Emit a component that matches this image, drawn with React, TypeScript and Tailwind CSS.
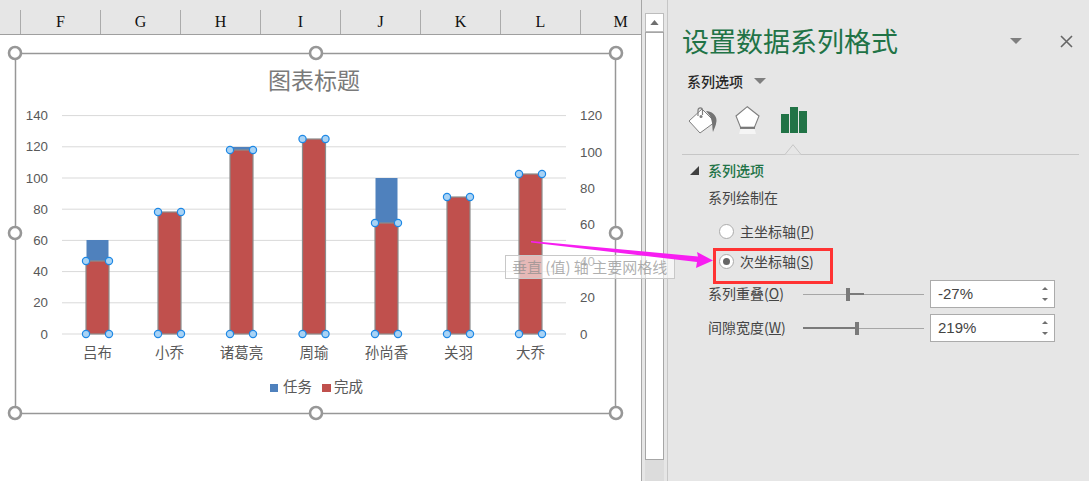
const cjk = "font-['Noto_Sans_CJK_SC','Liberation_Sans',sans-serif]";

const columns = ["F", "G", "H", "I", "J", "K", "L", "M"];

const gridLines = [334, 302.8, 271.6, 240.4, 209.2, 178, 146.8, 115.6];
const leftLabels = [0, 20, 40, 60, 80, 100, 120, 140];
const rightLabels = [0, 20, 40, 60, 80, 100, 120];

const people = [
  { name: "吕布", x: 97.5, blue: 240, red: 261 },
  { name: "小乔", x: 169.5, blue: 212, red: 212 },
  { name: "诸葛亮", x: 241.5, blue: 147, red: 150 },
  { name: "周瑜", x: 314, blue: 139, red: 139 },
  { name: "孙尚香", x: 386.5, blue: 178, red: 223 },
  { name: "关羽", x: 458.5, blue: 197, red: 197 },
  { name: "大乔", x: 530.5, blue: 174, red: 174 },
];

const frameHandles = [
  [15, 53],
  [316, 53],
  [616, 53],
  [15, 233],
  [616, 233],
  [15, 413],
  [316, 413],
  [616, 413],
];

function PointHandle({ x, y }: { x: number; y: number }) {
  return <circle cx={x} cy={y} r={3.6} fill="#a9d3f5" stroke="#1e88e5" strokeWidth={1.2} />;
}

function Chart() {
  return (
    <svg
      viewBox="15 53 601 360"
      className="ml-[15px] mt-[18px] h-[360px] w-[601px] overflow-visible"
    >
      <rect x={15.5} y={53.5} width={600} height={360} fill="#fff" stroke="#979797" strokeWidth={1.5} />
      <text x={314} y={89} textAnchor="middle" fontSize={23} fill="#7a7a7a" fontFamily="Noto Sans CJK SC">
        图表标题
      </text>
      {gridLines.map((y) => (
        <line key={y} x1={62} x2={566} y1={y} y2={y} stroke="#d9d9d9" strokeWidth={1} />
      ))}
      {leftLabels.map((v, i) => (
        <text key={v} x={48} y={338.5 - i * 31.2} textAnchor="end" fontSize={13.3} fill="#595959" fontFamily="Liberation Sans">
          {v}
        </text>
      ))}
      {rightLabels.map((v, i) => (
        <text key={v} x={580} y={338.5 - i * 36.4} fontSize={13.3} fill="#595959" fontFamily="Liberation Sans">
          {v}
        </text>
      ))}
      {people.map((p) => (
        <g key={p.name}>
          <rect x={p.x - 11} y={p.blue} width={22} height={334 - p.blue} fill="#4f81bd" />
          <rect x={p.x - 11.5} y={p.red} width={23} height={334 - p.red} fill="#c0504d" stroke="#8c8c8c" strokeWidth={1.2} />
          <PointHandle x={p.x - 11.5} y={p.red} />
          <PointHandle x={p.x + 11.5} y={p.red} />
          <PointHandle x={p.x - 11.5} y={334} />
          <PointHandle x={p.x + 11.5} y={334} />
          <text x={p.x} y={358} textAnchor="middle" fontSize={14.5} fill="#595959" fontFamily="Noto Sans CJK SC">
            {p.name}
          </text>
        </g>
      ))}
      <rect x={270} y={384} width={8} height={8} fill="#4f81bd" />
      <text x={283} y={392} fontSize={14.5} fill="#595959" fontFamily="Noto Sans CJK SC">
        任务
      </text>
      <rect x={322} y={384} width={9} height={8} fill="#c0504d" />
      <text x={334} y={392} fontSize={14.5} fill="#595959" fontFamily="Noto Sans CJK SC">
        完成
      </text>
      {frameHandles.map(([x, y]) => (
        <circle key={`${x}-${y}`} cx={x} cy={y} r={6} fill="#fff" stroke="#979797" strokeWidth={2.6} />
      ))}
    </svg>
  );
}

function Sheet() {
  return (
    <div className="h-full w-[642px] shrink-0 overflow-hidden border-r border-[#a6a6a6]">
      <div className="flex h-[35px] items-end border-b border-[#9f9f9f] bg-[#e6e6e6]">
        <div className="w-5 shrink-0" />
        {columns.map((c) => (
          <div
            key={c}
            className="flex h-6 w-20 shrink-0 items-center justify-center border-l border-[#ababab] font-['Liberation_Serif',serif] text-base font-medium text-[#111]"
          >
            {c}
          </div>
        ))}
      </div>
      <div className="h-[446px] bg-white">
        <Chart />
      </div>
    </div>
  );
}

function Scrollbar() {
  return (
    <div className="flex h-full w-[25px] shrink-0 bg-[#e6e6e6] pl-[3px]">
      <div className="mt-[13px] flex w-[19px] flex-col">
        <div className="flex h-[19px] items-center justify-center border border-[#bdbdbd] bg-white">
          <svg viewBox="0 0 10 6" className="h-[5px] w-[9px]">
            <path d="M5 0 10 6H0z" fill="#6f6f6f" />
          </svg>
        </div>
        <div className="h-[428px] border border-[#a6a6a6] bg-white" />
        <div className="flex-1 bg-[#dcdcdc]" />
      </div>
    </div>
  );
}

function PanelIcons() {
  return (
    <div className="ml-[19px] mt-[13px] flex h-[30px] items-start">
      <svg viewBox="0 0 30 30" className="h-[30px] w-[30px]">
        <path d="M15 5 28 18 13 29 2 17z" fill="#fff" stroke="#7f7f7f" strokeWidth={1} />
        <path d="M11 12V6.500C11 3 15.500 3 15.500 6.500V11" fill="none" stroke="#7f7f7f" strokeWidth={1.2} />
        <circle cx={14} cy={12.5} r={1.5} fill="#7f7f7f" />
        <path d="M19 7C24 7 30 11 29.500 17 29 22 27 25 26 28 25 23 26 19 23 12z" fill="#737373" />
      </svg>
      <svg viewBox="0 0 26 30" className="ml-[18px] h-[30px] w-[26px]">
        <path d="M12.300 2.700 24 12 19.300 23.700H5.700L1 12z" fill="#fff" stroke="#7f7f7f" strokeWidth={1.1} />
        <path d="M5 23.800H20" stroke="#777" strokeWidth={2.2} />
        <path d="M5.500 25H19.500L21 30H4z" fill="#f5f5f5" />
      </svg>
      <svg viewBox="0 0 26 26" className="ml-[20px] mt-[3px] h-[26px] w-[26px]">
        <rect x={0} y={7} width={8} height={19} fill="#217346" />
        <rect x={9} y={0} width={8} height={26} fill="#217346" />
        <rect x={18} y={4} width={8} height={22} fill="#217346" />
      </svg>
    </div>
  );
}

function Radio({ checked, label, mnemonic }: { checked?: boolean; label: string; mnemonic: string }) {
  return (
    <div className="flex h-[30px] items-center pl-[51px]">
      <span className="flex h-[15px] w-[15px] items-center justify-center rounded-full border border-[#ababab] bg-white">
        {checked && <span className="h-[7px] w-[7px] rounded-full bg-[#666]" />}
      </span>
      <span className="ml-[6px] text-sm text-[#444]">
        {label}(<span className="underline">{mnemonic}</span>)
      </span>
    </div>
  );
}

function Spin({ value }: { value: string }) {
  return (
    <div className="ml-[6px] flex h-[28px] w-[125px] items-center justify-between border border-[#ababab] bg-white pl-[7px] pr-[6px] font-['Liberation_Sans',sans-serif] text-[15px] text-[#444]">
      {value}
      <div className="flex h-full flex-col justify-between py-[6px]">
        <svg viewBox="0 0 6 3" className="h-[3px] w-[6px]">
          <path d="M3 0 6 3H0z" fill="#6f6f6f" />
        </svg>
        <svg viewBox="0 0 6 3" className="h-[3px] w-[6px]">
          <path d="M0 0H6L3 3z" fill="#6f6f6f" />
        </svg>
      </div>
    </div>
  );
}

function SliderRow({
  label,
  mnemonic,
  value,
  thick,
  thumb,
}: {
  label: string;
  mnemonic: string;
  value: string;
  thick: string;
  thumb: string;
}) {
  return (
    <div className="flex h-[34px] items-center pl-10">
      <span className="w-[95px] shrink-0 whitespace-nowrap pb-[2px] text-sm text-[#444]">
        {label}(<span className="underline">{mnemonic}</span>)
      </span>
      <div className="relative h-px w-[121px] shrink-0 bg-[#a6a6a6]">
        <div className={`absolute top-[-1px] h-[2px] bg-[#7a7a7a] ${thick}`} />
        <div className={`absolute top-[-6px] h-[13px] w-1 bg-[#7a7a7a] ${thumb}`} />
      </div>
      <Spin value={value} />
    </div>
  );
}

function Panel() {
  return (
    <div className={`relative h-full min-w-0 flex-1 border-l border-[#c6c6c6] bg-[#e6e6e6] ${cjk}`}>
      <div className="flex h-[91px] flex-col pl-[14px]">
        <div className="mt-[21px] flex items-center justify-between pr-[16px]">
          <h1 className="text-[27px] leading-[40px] font-normal whitespace-nowrap text-[#217346]">设置数据系列格式</h1>
          <div className="flex items-center gap-[38px]">
            <svg viewBox="0 0 12 6" className="h-[6px] w-3">
              <path d="M0 0H12L6 6z" fill="#7f7f7f" />
            </svg>
            <svg viewBox="0 0 13 13" className="h-[13px] w-[13px]">
              <path d="M1 1 12 12M12 1 1 12" stroke="#666" strokeWidth={1.6} />
            </svg>
          </div>
        </div>
        <div className="ml-[5px] mt-[10px] flex items-center text-sm leading-5 font-medium text-[#262626]">
          系列选项
          <svg viewBox="0 0 12 6" className="ml-[11px] h-[6px] w-3">
            <path d="M0 0H12L6 6z" fill="#7f7f7f" />
          </svg>
        </div>
      </div>
      <PanelIcons />
      <div className="relative mx-[14px] mt-[20px] h-px w-[397px] bg-[#c6c6c6]">
        <svg viewBox="0 0 18 11" className="absolute left-[102px] top-[-10px] h-[11px] w-[18px]">
          <path d="M0 10.500H1L9 .7 17 10.500H18" fill="#e6e6e6" stroke="#c6c6c6" strokeWidth={1} />
        </svg>
      </div>
      <div className="flex h-[30px] items-center pl-[22px]">
        <svg viewBox="0 0 9 9" className="h-[9px] w-[9px]">
          <path d="M9 0V9H0z" fill="#404040" />
        </svg>
        <span className="ml-[9px] text-sm font-medium text-[#217346]">系列选项</span>
      </div>
      <div className="pl-10 pt-[2px] text-sm leading-5 text-[#444]">系列绘制在</div>
      <div className="mt-[9px]">
        <Radio label="主坐标轴" mnemonic="P" />
        <Radio checked label="次坐标轴" mnemonic="S" />
      </div>
      <div className="mt-[1px]">
        <SliderRow label="系列重叠" mnemonic="O" value="-27%" thick="left-[45px] w-[16px]" thumb="left-[43px]" />
        <SliderRow label="间隙宽度" mnemonic="W" value="219%" thick="left-0 w-[54px]" thumb="left-[52px]" />
      </div>
    </div>
  );
}

export default function App() {
  return (
    <div className="relative flex h-[481px] w-[1089px] overflow-hidden bg-white">
      <Sheet />
      <Scrollbar />
      <Panel />

      {/* tooltip of the chart sits over the sheet and the task pane */}
      <div
        className={`absolute left-[505px] top-[255px] flex h-[24px] w-[170px] items-center whitespace-nowrap border border-[#c8c8c8] bg-white/60 pl-[6px] text-[15px] text-[#8c8c8c]/70 ${cjk}`}
      >
        垂直 (值) 轴 主要网格线
      </div>

      <div className="absolute left-[713px] top-[248px] h-[36px] w-[120px] border-[3px] border-[#ff3333]" />

      <svg viewBox="0 0 1089 481" className="pointer-events-none absolute inset-0 h-full w-full">
        <path d="M531 241 698 256.500 697 252 713 260.500 696 268 697 262 531 242.500z" fill="#f71ef1" />
      </svg>
    </div>
  );
}
